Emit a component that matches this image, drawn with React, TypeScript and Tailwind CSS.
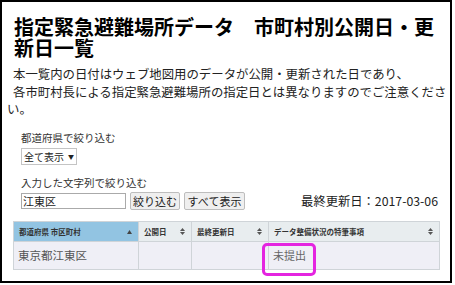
import React from 'react';

const font = { fontFamily: '"Noto Sans CJK JP", "Noto Sans", sans-serif' };

function SortBoth() {
  return (
    <svg width="5" height="7" viewBox="0 0 5 7" className="shrink-0">
      <path d="M2.5 0 L5 3 L0 3 Z" fill="#555" />
      <path d="M2.5 7 L5 4 L0 4 Z" fill="#555" />
    </svg>
  );
}

function SortUp() {
  return (
    <svg width="5" height="4" viewBox="0 0 5 4" className="shrink-0">
      <path d="M2.5 0 L5 4 L0 4 Z" fill="#444" />
    </svg>
  );
}

function HeadCell({ label, width, active }: { label: string; width: number; active?: boolean }) {
  return (
    <th
      style={{ width }}
      className={`h-[20px] border border-[#cfd4d8] p-0 text-left align-middle ${active ? 'bg-[#92c4e2]' : 'bg-[#e8edef]'}`}
    >
      <div className="flex items-center justify-between pl-[5px] pr-[6px]">
        <span className="text-[7.5px] font-bold leading-none text-[#333] whitespace-nowrap">{label}</span>
        {active ? <SortUp /> : <SortBoth />}
      </div>
    </th>
  );
}

export default function App() {
  return (
    <div className="bg-white w-[455px] h-[285px]" style={font}>
      <div className="relative w-[452px] h-[283px] border-2 border-black bg-white">
        <h1 className="ml-[12px] mr-[4px] mt-[14px] text-[20px] leading-[21px] font-bold text-black">
          指定緊急避難場所データ　市町村別公開日・更新日一覧
        </h1>

        <div className="mt-[8px] pl-[5px] text-[12.4px] leading-[17.5px] text-[#222] whitespace-nowrap">
          <div className="pl-[6px]">本一覧内の日付はウェブ地図用のデータが公開・更新された日であり、</div>
          <div className="pl-[6px]">各市町村長による指定緊急避難場所の指定日とは異なりますのでご注意くださ</div>
          <div>い。</div>
        </div>

        <div className="pl-[19px] pr-[12px]">
          <div className="mt-[12.5px] text-[10.5px] leading-[14px] text-[#333]">都道府県で絞り込む</div>
          <div className="mt-[3px] flex items-center gap-[4px] w-[56px] h-[17px] border border-[#c4c4c4] bg-white pl-[2px] text-[10px] text-[#222] whitespace-nowrap">
            <span>全て表示</span>
            <span className="text-[6px] leading-none">▼</span>
          </div>

          <div className="mt-[11px] text-[10.5px] leading-[14px] text-[#333]">入力した文字列で絞り込む</div>
          <div className="mt-[2px] flex items-center h-[18px]">
            <div className="flex items-center w-[105px] h-[16px] border border-[#aaa] bg-white pl-[1px] text-[11px] text-[#222]">
              江東区
            </div>
            <button className="ml-[4px] h-[18px] w-[50px] border border-[#bdbdbd] bg-[#efefef] rounded-[2px] text-[11px] text-[#222] leading-none">
              絞り込む
            </button>
            <button className="ml-[4px] h-[18px] w-[61px] border border-[#bdbdbd] bg-[#efefef] rounded-[2px] text-[11px] text-[#222] leading-none">
              すべて表示
            </button>
            <div className="ml-auto text-[12.3px] leading-none text-[#222] whitespace-nowrap">
              最終更新日：2017-03-06
            </div>
          </div>
        </div>

        <table className="mt-[11px] ml-[11px] border-collapse table-fixed w-[426px]">
          <thead>
            <tr>
              <HeadCell label="都道府県 市区町村" width={125} active />
              <HeadCell label="公開日" width={53} />
              <HeadCell label="最終更新日" width={77} />
              <HeadCell label="データ整備状況の特筆事項" width={171} />
            </tr>
          </thead>
          <tbody>
            <tr className="bg-[#efeff6] h-[28px]">
              <td className="border border-[#cfd4d8] pl-[4px] text-[11.5px] text-[#555] align-middle">東京都江東区</td>
              <td className="border border-[#cfd4d8]" />
              <td className="border border-[#cfd4d8]" />
              <td className="border border-[#cfd4d8] pl-[4px] text-[11px] text-[#666] align-middle">未提出</td>
            </tr>
          </tbody>
        </table>

        <div className="absolute left-[260px] top-[241px] w-[54px] h-[33px] border-[3px] border-[#e424e0] rounded-[5px]" />
      </div>
    </div>
  );
}
